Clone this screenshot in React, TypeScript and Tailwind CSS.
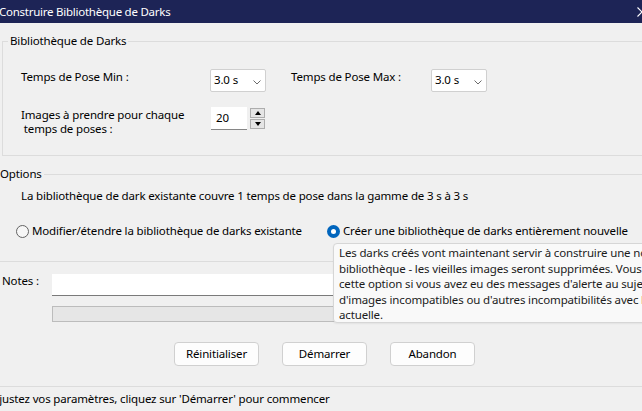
import React from "react";

// ─── Small controls ──────────────────────────────────────────────────────────

function Combo({ value }: { value: string }) {
  return (
    <div className="flex h-[23px] w-[56px] items-start justify-between rounded-[2px] border border-[#d0d0d0] bg-white pl-[3px] pr-[4px] pt-[2px]">
      <span className="leading-[16px]">{value}</span>
      <svg width="8" height="5" viewBox="0 0 8 5" className="mt-[8px]">
        <polyline points="0.5,0.5 4,4 7.5,0.5" fill="none" stroke="#6b6b6b" strokeWidth="1" />
      </svg>
    </div>
  );
}

function SpinButton({ up }: { up?: boolean }) {
  return (
    <div className="flex h-[10px] w-[15px] items-center justify-center border border-[#adadad] bg-[#e5e5e5]">
      <svg width="6" height="4" viewBox="0 0 6 4">
        {up ? <polygon points="0,4 6,4 3,0" fill="#000" /> : <polygon points="0,0 6,0 3,4" fill="#000" />}
      </svg>
    </div>
  );
}

function Radio({ checked }: { checked?: boolean }) {
  return checked ? (
    <span className="flex h-[13px] w-[13px] shrink-0 items-center justify-center rounded-full bg-[#0065bd]">
      <span className="h-[5px] w-[5px] rounded-full bg-white" />
    </span>
  ) : (
    <span className="h-[13px] w-[13px] shrink-0 rounded-full border border-[#626262] bg-[#f6f6f6]" />
  );
}

function Button({ children }: { children: React.ReactNode }) {
  return (
    <button className="flex h-[24px] w-[85px] items-center justify-center rounded-[4px] border border-[#d0d0d0] bg-[#fdfdfd] leading-[16px]">
      {children}
    </button>
  );
}

// ─── Dialog ──────────────────────────────────────────────────────────────────

export default function App() {
  return (
    <div className="relative flex h-[411px] w-[642px] flex-col overflow-hidden bg-[#f0f0f0] font-['Segoe_UI','Noto_Sans',sans-serif] text-[11.5px] leading-[16px] tracking-[-0.15px] text-black">
      {/* Title bar */}
      <div className="flex h-[23px] w-full shrink-0 items-center bg-[#1d2456] text-white">
        <span className="-ml-[1px] leading-[16px] tracking-[-0.25px]">Construire Bibliothèque de Darks</span>
        <svg width="10" height="10" viewBox="0 0 10 10" className="-mr-[5px] ml-auto">
          <path d="M0.5 0.5 L9.5 9.5 M9.5 0.5 L0.5 9.5" stroke="#fff" strokeWidth="1.1" />
        </svg>
      </div>

      {/* Bibliothèque de Darks group */}
      <fieldset className="ml-[2px] mt-[10px] w-[700px] shrink-0 border border-[#dcdcdc] pb-[25px] pl-[18px]">
        <legend className="-ml-[13px] px-[2px] leading-[16px]">Bibliothèque de Darks</legend>

        <div className="mt-[20px] flex items-start">
          <span className="w-[189px]">Temps de Pose Min :</span>
          <Combo value="3.0 s" />
          <span className="ml-[25px] w-[140px]">Temps de Pose Max :</span>
          <Combo value="3.0 s" />
        </div>

        <div className="mt-[15px] flex h-[23px] items-start">
          <span className="mt-[1px] w-[190px] leading-[14px]">
            Images à prendre pour chaque
            <br />
            &nbsp;temps de poses :
          </span>
          <div className="h-[23px] w-[36px] border-b border-[#868686] bg-white pl-[5px] pt-[3px]">20</div>
          <div className="ml-[3px] mt-[1px] flex flex-col gap-[1px]">
            <SpinButton up />
            <SpinButton />
          </div>
        </div>
      </fieldset>

      {/* Options group */}
      <fieldset className="mt-[10px] w-[700px] shrink-0 border-0 border-t border-[#dcdcdc]">
        <legend className="pr-[2px] leading-[16px]">Options</legend>
        <p className="mt-[6px] pl-[21px]">
          La bibliothèque de dark existante couvre 1 temps de pose dans la gamme de 3 s à 3 s
        </p>
        <div className="mt-[19px] flex h-[16px] items-center pl-[16px]">
          <label className="flex w-[311px] items-center gap-[3px]">
            <Radio />
            <span>Modifier/étendre la bibliothèque de darks existante</span>
          </label>
          <label className="flex items-center gap-[3px] whitespace-nowrap">
            <Radio checked />
            <span>Créer une bibliothèque de darks entièrement nouvelle</span>
          </label>
        </div>
        <div className="mt-[22px] h-px w-full bg-[#dcdcdc]" />
      </fieldset>

      {/* Notes */}
      <div className="mt-[12px] flex shrink-0 items-start pl-[2px]">
        <span className="-mt-[1px] w-[50px]">Notes :</span>
        <div className="h-[22px] w-[580px] border-b border-[#7a7a7a] bg-white" />
      </div>
      <div className="ml-[52px] mt-[10px] h-[16px] w-[580px] shrink-0 border border-[#bcbcbc] bg-[#e6e6e6]" />

      {/* Buttons */}
      <div className="mt-[20px] flex shrink-0 gap-[23px] pl-[174px]">
        <Button>Réinitialiser</Button>
        <Button>Démarrer</Button>
        <Button>Abandon</Button>
      </div>

      {/* Status */}
      <div className="mt-[20px] h-px w-full shrink-0 bg-[#dcdcdc]" />
      <p className="-ml-[8px] mt-[4px] whitespace-nowrap">
        Ajustez vos paramètres, cliquez sur 'Démarrer' pour commencer
      </p>

      {/* Tooltip over the radio option */}
      <div className="absolute left-[333px] top-[243px] h-[80px] w-[420px] whitespace-nowrap rounded-[4px] border border-[#d6d6d6] bg-[#f9f9f9] pl-[5px] pt-[1px] leading-[15.5px] text-[#1b1b1b] shadow-[0_1px_2px_rgba(0,0,0,0.06)]">
        Les darks créés vont maintenant servir à construire une nouvelle
        <br />
        bibliothèque - les vieilles images seront supprimées. Vous devriez
        <br />
        cette option si vous avez eu des messages d'alerte au sujet
        <br />
        d'images incompatibles ou d'autres incompatibilités avec la
        <br />
        actuelle.
      </div>
    </div>
  );
}
